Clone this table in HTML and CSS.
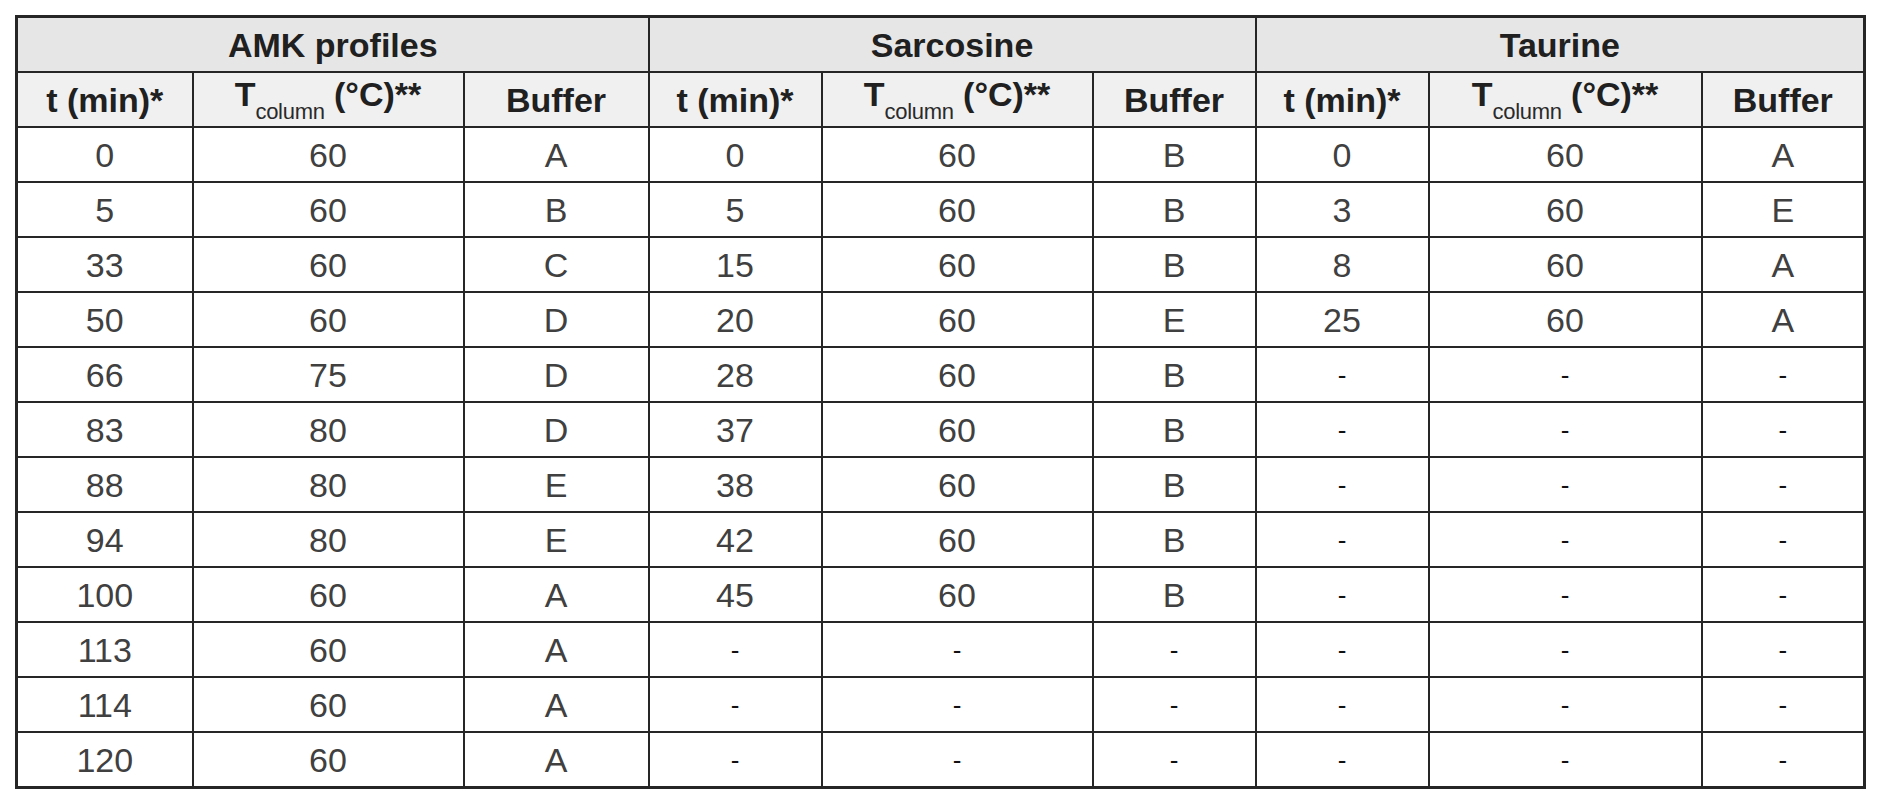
FILE: index.html
```html
<!DOCTYPE html>
<html>
<head>
<meta charset="utf-8">
<link rel="stylesheet" href="styles.css">
</head>
<body>
<table class="grid">
  <colgroup>
    <col class="c-t"><col class="c-temp"><col class="c-buf1">
    <col class="c-t2"><col class="c-temp"><col class="c-buf">
    <col class="c-t2"><col class="c-temp3"><col class="c-buf">
  </colgroup>
  <thead>
    <tr class="group-row">
      <th colspan="3">AMK profiles</th>
      <th colspan="3">Sarcosine</th>
      <th colspan="3">Taurine</th>
    </tr>
    <tr class="head-row">
      <th>t (min)*</th><th>T<span class="sub">column</span> (°C)**</th><th>Buffer</th>
      <th>t (min)*</th><th>T<span class="sub">column</span> (°C)**</th><th>Buffer</th>
      <th>t (min)*</th><th>T<span class="sub">column</span> (°C)**</th><th>Buffer</th>
    </tr>
  </thead>
  <tbody>
    <tr><td>0</td><td>60</td><td>A</td><td>0</td><td>60</td><td>B</td><td>0</td><td>60</td><td>A</td></tr>
    <tr><td>5</td><td>60</td><td>B</td><td>5</td><td>60</td><td>B</td><td>3</td><td>60</td><td>E</td></tr>
    <tr><td>33</td><td>60</td><td>C</td><td>15</td><td>60</td><td>B</td><td>8</td><td>60</td><td>A</td></tr>
    <tr><td>50</td><td>60</td><td>D</td><td>20</td><td>60</td><td>E</td><td>25</td><td>60</td><td>A</td></tr>
    <tr><td>66</td><td>75</td><td>D</td><td>28</td><td>60</td><td>B</td><td class="dash">-</td><td class="dash">-</td><td class="dash">-</td></tr>
    <tr><td>83</td><td>80</td><td>D</td><td>37</td><td>60</td><td>B</td><td class="dash">-</td><td class="dash">-</td><td class="dash">-</td></tr>
    <tr><td>88</td><td>80</td><td>E</td><td>38</td><td>60</td><td>B</td><td class="dash">-</td><td class="dash">-</td><td class="dash">-</td></tr>
    <tr><td>94</td><td>80</td><td>E</td><td>42</td><td>60</td><td>B</td><td class="dash">-</td><td class="dash">-</td><td class="dash">-</td></tr>
    <tr><td>100</td><td>60</td><td>A</td><td>45</td><td>60</td><td>B</td><td class="dash">-</td><td class="dash">-</td><td class="dash">-</td></tr>
    <tr><td>113</td><td>60</td><td>A</td><td class="dash">-</td><td class="dash">-</td><td class="dash">-</td><td class="dash">-</td><td class="dash">-</td><td class="dash">-</td></tr>
    <tr><td>114</td><td>60</td><td>A</td><td class="dash">-</td><td class="dash">-</td><td class="dash">-</td><td class="dash">-</td><td class="dash">-</td><td class="dash">-</td></tr>
    <tr><td>120</td><td>60</td><td>A</td><td class="dash">-</td><td class="dash">-</td><td class="dash">-</td><td class="dash">-</td><td class="dash">-</td><td class="dash">-</td></tr>
  </tbody>
</table>
</body>
</html>
```
FILE: styles.css
```css
html, body {
  margin: 0;
  padding: 0;
  background: #ffffff;
}
body {
  padding: 15px 0 0 15px;
  font-family: "Liberation Sans", Arial, sans-serif;
}
.grid {
  border-collapse: collapse;
  table-layout: fixed;
  width: 1849px;
  border: 3px solid #262626;
}
.c-t { width: 176px; }
.c-temp { width: 271px; }
.c-temp3 { width: 273px; }
.c-buf1 { width: 185px; }
.c-t2 { width: 173px; }
.c-buf { width: 163px; }
.grid th, .grid td {
  border: 2px solid #262626;
  height: 53px;
  padding: 0;
  text-align: center;
  vertical-align: middle;
  line-height: 1;
}
.grid th {
  font-weight: bold;
  font-size: 34px;
  color: #202020;
}
.group-row th {
  background: #e6e6e6;
}
.head-row th {
  background: #f0f0f0;
}
.sub {
  font-size: 22px;
  vertical-align: -13px;
  font-weight: normal;
  color: #2a2a2a;
  letter-spacing: -0.3px;
}
.grid td {
  font-size: 34px;
  color: #404040;
}
.grid td.dash {
  color: #111111;
  font-size: 26px;
}
```
